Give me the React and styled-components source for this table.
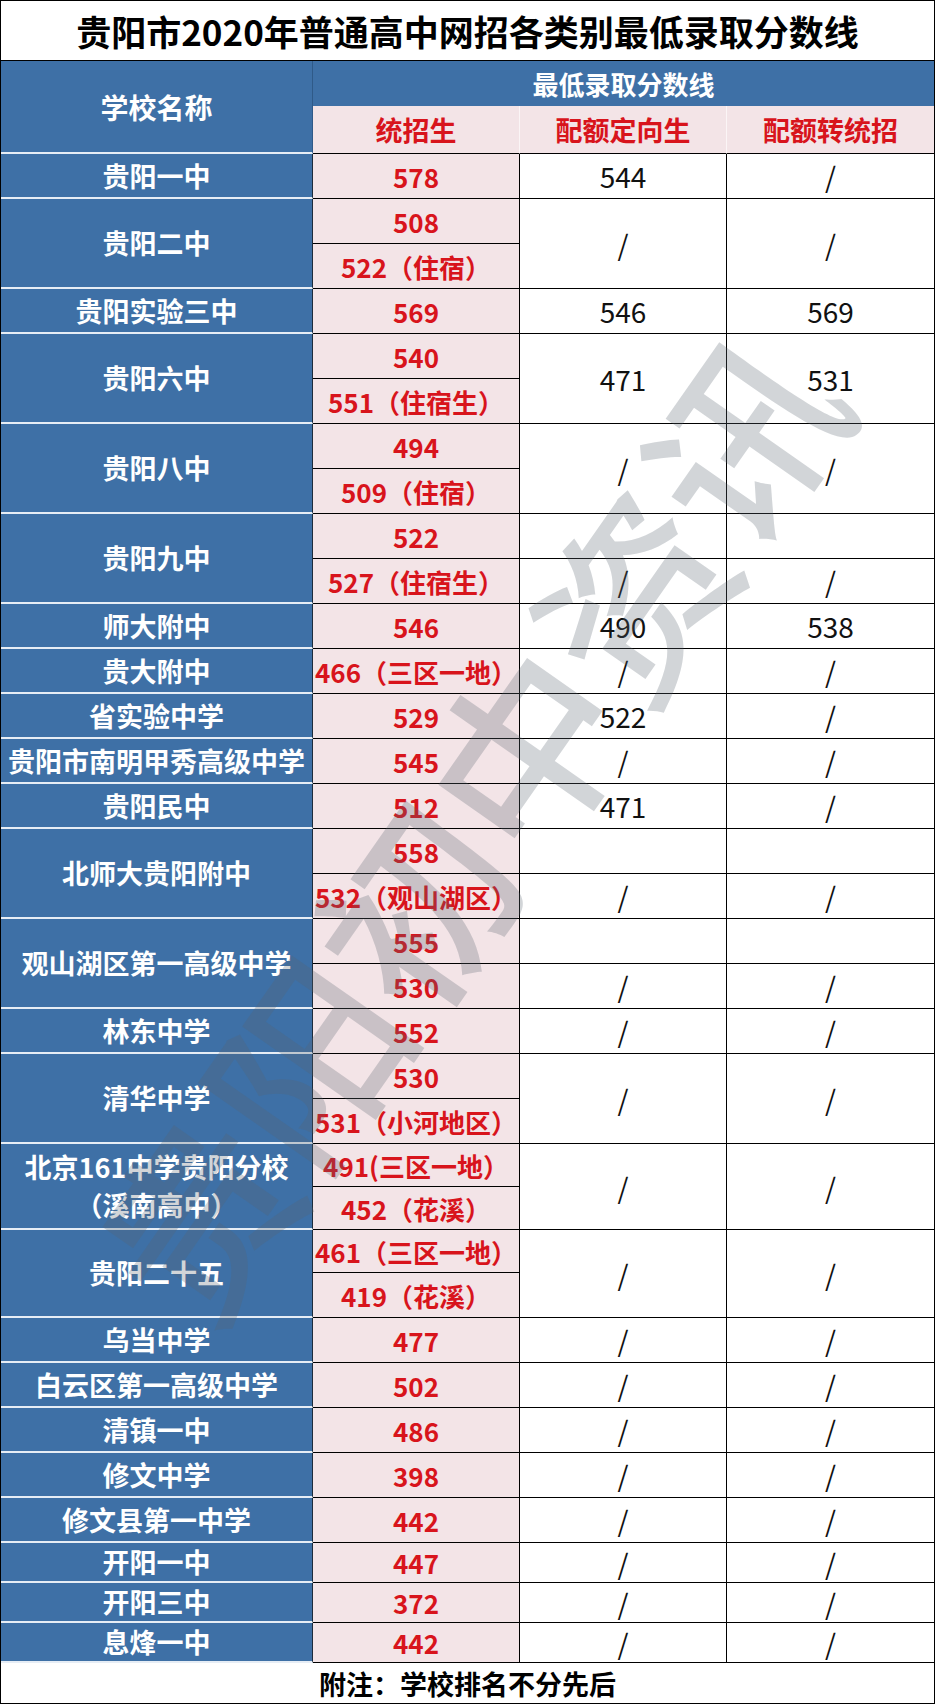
import React from 'react'
import styled, { createGlobalStyle } from 'styled-components'

const BLUE = '#3e70a6'
const PINK = '#f3e4e7'
const RED = '#d8141c'

const GlobalStyle = createGlobalStyle`
  html, body {
    margin: 0;
    padding: 0;
    background: #fff;
  }
  body {
    font-family: "Noto Sans CJK SC", "Noto Sans", sans-serif;
  }
`

const Sheet = styled.div`
  position: relative;
  width: 935px;
  overflow: hidden;
  background: #fff;
`

const Title = styled.div`
  height: 61px;
  box-sizing: border-box;
  border: 1px solid #000;
  display: flex;
  align-items: center;
  justify-content: center;
  font-size: 35px;
  font-weight: 700;
  color: #000;
`

const Grid = styled.div`
  display: grid;
  grid-template-columns: 312px 207px 207px 208px;
  grid-template-rows: ${p => p.$rows};
  border-left: 1px solid #000;
`

const Cell = styled.div`
  box-sizing: border-box;
  display: flex;
  align-items: center;
  justify-content: center;
  overflow: hidden;
  white-space: nowrap;
  grid-row: span ${p => p.$span || 1};
  grid-column: span ${p => p.$cols || 1};
`

const HeadName = styled(Cell)`
  background: ${BLUE};
  color: #fff;
  font-size: 28px;
  font-weight: 700;
  border-right: 1px solid #2f5a88;
  border-bottom: 2px solid #e6edf5;
`

const HeadGroup = styled(Cell)`
  background: ${BLUE};
  color: #fff;
  font-size: 26px;
  font-weight: 700;
  border-right: 1px solid #000;
`

const SubHead = styled(Cell)`
  background: ${PINK};
  color: ${RED};
  font-size: 27px;
  font-weight: 700;
  border-right: 1px solid ${p => (p.$last ? '#000' : '#fbf5f6')};
  border-bottom: 1px solid #000;
`

const NameCell = styled(Cell)`
  flex-direction: column;
  background: ${BLUE};
  color: #fff;
  font-size: 27px;
  font-weight: 700;
  line-height: 1.4;
  border-right: 1px solid #1d2c3c;
  border-bottom: 2px solid #e6edf5;
`

const ScoreCell = styled(Cell)`
  background: ${PINK};
  color: ${RED};
  font-size: 26px;
  font-weight: 700;
  border-right: 1px solid #000;
  border-bottom: 1px solid #000;
`

const ValueCell = styled(Cell)`
  background: #fff;
  color: #111;
  font-size: 28px;
  font-weight: 400;
  border-right: 1px solid #000;
  border-bottom: 1px solid #000;
`

const Footer = styled.div`
  height: 41px;
  box-sizing: border-box;
  border: 1px solid #000;
  border-top: none;
  display: flex;
  align-items: center;
  justify-content: center;
  font-size: 27px;
  font-weight: 700;
  color: #000;
`

const Watermark = styled.div`
  position: absolute;
  left: 465px;
  top: 825px;
  transform: translate(-50%, -50%) rotate(-55deg);
  font-size: 190px;
  font-weight: 500;
  color: rgba(90, 100, 110, 0.27);
  white-space: nowrap;
  pointer-events: none;
  line-height: 1;
`

const schools = [
  { name: ['贵阳一中'], scores: ['578'], quota: ['544', '/'] },
  { name: ['贵阳二中'], scores: ['508', '522（住宿）'], quota: ['/', '/'] },
  { name: ['贵阳实验三中'], scores: ['569'], quota: ['546', '569'] },
  { name: ['贵阳六中'], scores: ['540', '551（住宿生）'], quota: ['471', '531'] },
  { name: ['贵阳八中'], scores: ['494', '509（住宿）'], quota: ['/', '/'] },
  { name: ['贵阳九中'], scores: ['522', '527（住宿生）'], split: [['', ''], ['/', '/']] },
  { name: ['师大附中'], scores: ['546'], quota: ['490', '538'] },
  { name: ['贵大附中'], scores: ['466（三区一地）'], quota: ['/', '/'] },
  { name: ['省实验中学'], scores: ['529'], quota: ['522', '/'] },
  { name: ['贵阳市南明甲秀高级中学'], scores: ['545'], quota: ['/', '/'] },
  { name: ['贵阳民中'], scores: ['512'], quota: ['471', '/'] },
  { name: ['北师大贵阳附中'], scores: ['558', '532（观山湖区）'], split: [['', ''], ['/', '/']] },
  { name: ['观山湖区第一高级中学'], scores: ['555', '530'], split: [['', ''], ['/', '/']] },
  { name: ['林东中学'], scores: ['552'], quota: ['/', '/'] },
  { name: ['清华中学'], scores: ['530', '531（小河地区）'], quota: ['/', '/'] },
  { name: ['北京161中学贵阳分校', '（溪南高中）'], scores: ['491(三区一地）', '452（花溪）'], quota: ['/', '/'] },
  { name: ['贵阳二十五'], scores: ['461（三区一地）', '419（花溪）'], quota: ['/', '/'] },
  { name: ['乌当中学'], scores: ['477'], quota: ['/', '/'] },
  { name: ['白云区第一高级中学'], scores: ['502'], quota: ['/', '/'] },
  { name: ['清镇一中'], scores: ['486'], quota: ['/', '/'] },
  { name: ['修文中学'], scores: ['398'], quota: ['/', '/'] },
  { name: ['修文县第一中学'], scores: ['442'], quota: ['/', '/'] },
  { name: ['开阳一中'], scores: ['447'], quota: ['/', '/'] },
  { name: ['开阳三中'], scores: ['372'], quota: ['/', '/'] },
  { name: ['息烽一中'], scores: ['442'], quota: ['/', '/'] },
]

// heights of the 34 data rows, measured from the sheet
const rowHeights = [
  ...Array(22).fill(45),
  43, 43, 43, 45,
  ...Array(5).fill(45),
  40, 40, 40,
]

function SchoolRows({ school }) {
  const n = school.scores.length
  const cells = [
    <NameCell key="name" $span={n}>
      {school.name.map(line => <span key={line}>{line}</span>)}
    </NameCell>,
    <ScoreCell key="s0">{school.scores[0]}</ScoreCell>,
  ]
  if (school.split) {
    cells.push(<ValueCell key="a0">{school.split[0][0]}</ValueCell>)
    cells.push(<ValueCell key="b0">{school.split[0][1]}</ValueCell>)
  } else {
    cells.push(<ValueCell key="a0" $span={n}>{school.quota[0]}</ValueCell>)
    cells.push(<ValueCell key="b0" $span={n}>{school.quota[1]}</ValueCell>)
  }
  for (let i = 1; i < n; i++) {
    cells.push(<ScoreCell key={'s' + i}>{school.scores[i]}</ScoreCell>)
    if (school.split) {
      cells.push(<ValueCell key={'a' + i}>{school.split[i][0]}</ValueCell>)
      cells.push(<ValueCell key={'b' + i}>{school.split[i][1]}</ValueCell>)
    }
  }
  return cells
}

export default function App() {
  const rows = ['45px', '48px', ...rowHeights.map(h => h + 'px')].join(' ')
  return (
    <>
      <GlobalStyle />
      <Sheet>
        <Title>贵阳市2020年普通高中网招各类别最低录取分数线</Title>
        <Grid $rows={rows}>
          <HeadName $span={2}>学校名称</HeadName>
          <HeadGroup $cols={3}>最低录取分数线</HeadGroup>
          <SubHead>统招生</SubHead>
          <SubHead>配额定向生</SubHead>
          <SubHead $last>配额转统招</SubHead>
          {schools.map(s => (
            <SchoolRows key={s.name[0]} school={s} />
          ))}
        </Grid>
        <Footer>附注：学校排名不分先后</Footer>
        <Watermark>贵阳初中资讯</Watermark>
      </Sheet>
    </>
  )
}
